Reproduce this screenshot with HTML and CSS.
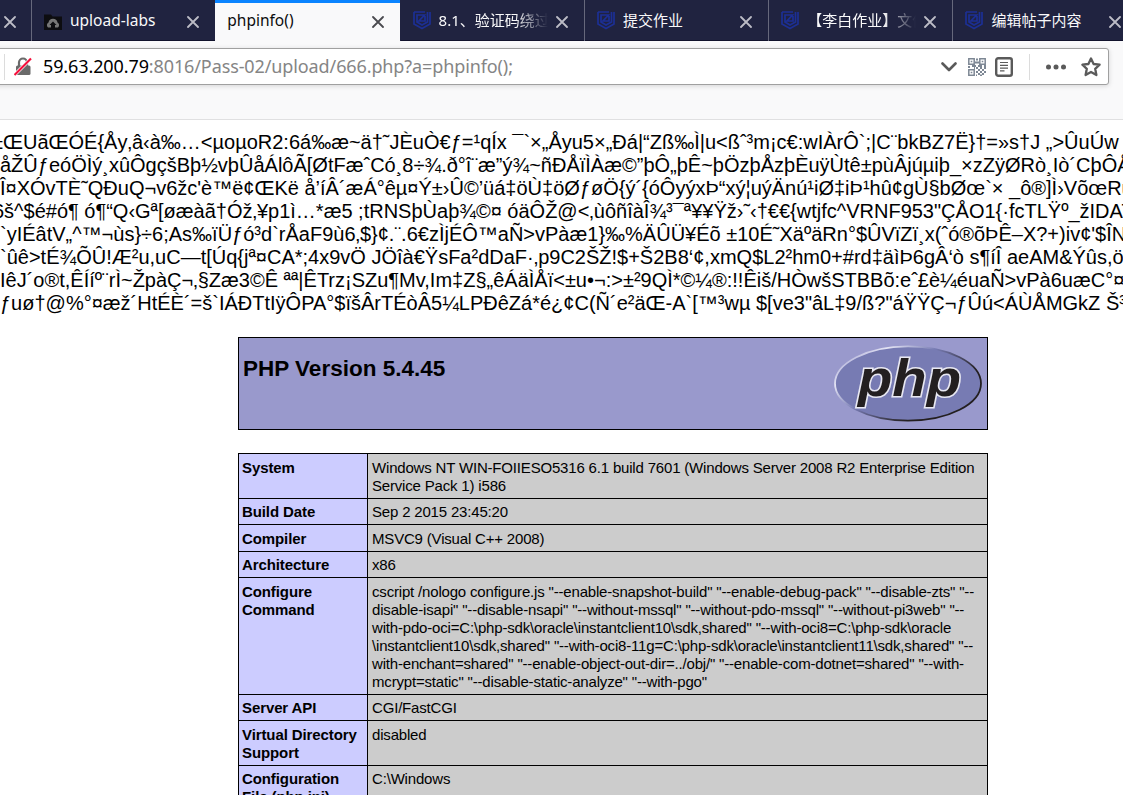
FILE: index.html
```html
<!DOCTYPE html>
<html lang="en">
<head>
    <meta charset="UTF-8">
    <meta name="viewport" content="width=device-width, initial-scale=1.0">
    <title>phpinfo()</title>
    <link rel="stylesheet" href="styles.css">
</head>
<body>
    <!-- shared icons -->
    <svg class="defs" width="0" height="0">
        <symbol id="close" viewBox="0 0 12 12">
            <path d="M1 1L11 11M11 1L1 11" fill="none" stroke="currentColor" stroke-width="1.8" stroke-linecap="round"/>
        </symbol>
        <symbol id="shield" viewBox="0 0 18 19">
            <path d="M1 1H12M17 1V13L9 17.500L1 13V1M14.500 1V11L9 14L4 11V4H11.500L6 10H12V5" fill="none" stroke="#1c2f94" stroke-width="1.700"/>
        </symbol>
    </svg>
    <div class="tabs">
        <div class="tab first"><svg class="close"><use href="#close"/></svg></div>
        <div class="tab">
            <svg class="icon folder" viewBox="0 0 20 18">
                <path d="M1 1.500H8L9.500 3.500H19V17H1Z" fill="#0d0d10"/>
                <path d="M5 14.500A3 3 0 0 1 5.500 9.500A4.600 4.600 0 0 1 14.500 9.500A3 3 0 0 1 15 14.500H12V12H13.500L10 8.500L6.500 12H8V14.500Z" fill="#777"/>
            </svg>
            <span class="title latin">upload-labs</span>
            <svg class="close"><use href="#close"/></svg>
        </div>
        <div class="tab active">
            <span class="title latin">phpinfo()</span>
            <svg class="close"><use href="#close"/></svg>
        </div>
        <div class="tab">
            <svg class="icon"><use href="#shield"/></svg>
            <span class="title fade">8.1、验证码绕过</span>
            <svg class="close"><use href="#close"/></svg>
        </div>
        <div class="tab">
            <svg class="icon"><use href="#shield"/></svg>
            <span class="title">提交作业</span>
            <svg class="close"><use href="#close"/></svg>
        </div>
        <div class="tab">
            <svg class="icon"><use href="#shield"/></svg>
            <span class="title fade">【李白作业】文件</span>
            <svg class="close"><use href="#close"/></svg>
        </div>
        <div class="tab">
            <svg class="icon"><use href="#shield"/></svg>
            <span class="title">编辑帖子内容</span>
            <svg class="close"><use href="#close"/></svg>
        </div>
    </div>
    <div class="toolbar">
        <div class="urlbar">
            <span class="line"></span>
            <svg class="lock" width="18" height="19" viewBox="0 0 18 19">
                <path d="M5 9V5.500A4 4 0 0 1 13 5.500V9" fill="none" stroke="#6a6a6a" stroke-width="2.200"/>
                <rect x="2" y="8.500" width="14.500" height="9.500" rx="1.500" fill="#6a6a6a"/>
                <path d="M0.500 18L17 1.500" stroke="#fff" stroke-width="3.400"/>
                <path d="M0.500 18L17 1.500" stroke="#f5103c" stroke-width="2.200"/>
            </svg>
            <span class="url"><b>59.63.200.79</b>:8016/Pass-02/upload/666.php?a=phpinfo();</span>
            <svg class="arrow" width="16" height="10" viewBox="0 0 16 10"><path d="M1.500 1.500L8 8L14.500 1.500" fill="none" stroke="#5a5a5a" stroke-width="2.600" stroke-linecap="round" stroke-linejoin="round"/></svg>
            <svg class="qr" width="18" height="18" viewBox="0 0 18 18" fill="none" stroke="#7d8794">
                <path d="M.8 .8H6.200V6.200H.8ZM11.800 .8H17.200V6.200H11.800ZM.8 11.800H6.200V17.200H.8Z" stroke-width="1.500"/>
                <path d="M2.700 3.500H4.300M13.700 3.500H15.300M2.700 14.500H4.300" stroke-width="1.600"/>
                <path d="M8 1.500H10M7 4.500H11M0 9H2M4 8H8M8 10H10M12 8H14M16 8H18M10 12H12M14 12H16M8 14H10M12 14H14M16 14H18M10 16H12M14 16H16M12 10H14M16 10H18M8 17.500H9M12 17.500H14M10 8H12M6 10H7" stroke-width="1.900"/>
            </svg>
            <svg class="reader" width="18" height="20" viewBox="0 0 18 20" fill="none" stroke="#5a5a5a">
                <rect x="1.200" y="1.200" width="15.600" height="17.600" rx="2" stroke-width="2.400"/>
                <path d="M5 5.500H13M5 8.300H13M5 11.100H13M5 13.900H9.500" stroke-width="1.200"/>
            </svg>
            <span class="line right"></span>
            <svg class="dots" width="20" height="6" viewBox="0 0 20 6" fill="#5a5a5a"><circle cx="2.500" cy="3" r="2.500"/><circle cx="10" cy="3" r="2.500"/><circle cx="17.500" cy="3" r="2.500"/></svg>
            <svg class="star" width="20" height="20" viewBox="0 0 20 20"><path d="M10 1.500L12.600 7L18.600 7.700L14.200 11.800L15.400 18L10 15L4.600 18L5.800 11.800L1.400 7.700L7.400 7Z" fill="none" stroke="#5a5a5a" stroke-width="2.300" stroke-linejoin="round"/></svg>
        </div>
    </div>
    <div class="page">
        <!-- raw bytes of the uploaded picture -->
        <div class="raw">
            <p class="r1">±ŒUãŒÓÉ{Åy‚â‹à‰…&lt;µoµoR2:6á‰æ~ä†˜JÈuÒ€ƒ=¹qÍx ¯`×„Åyu5×„Ðá|“Zß‰Ì|u&lt;ßˆ³m¡c€:wIÀrÔ`;|C¨bkBZ7Ë}†=»s†J „&gt;ÛuÚw</p>
            <p class="r2">åŽÛƒeóÖÌý¸xûÔgçšBþ½vþÛåÁlôÃ[ØtFæˆCó¸8÷¾.ð°î¨æ”ý¾~ñÐÅïÌÀæ©”þÔ„þÊ~þÖzþÅzþÈuÿÙtê±pùÂjúµiþ_×zZÿØRò¸Iò´CþÔÅ</p>
            <p class="r3">Î¤XÓvTÈ˜QÐuQ¬v6žc'è™ë¢ŒKë å’íÂ´æÁ°êµ¤Ý±›Û©’üá‡öÙ‡öØƒøÖ{ý´{óÔyýxÞ“xý¦uýÄnú¹iØ‡iÞ¹hû¢gÙ§bØœ`× _ô®]Ì›VõœRü</p>
            <p class="r4">6š^$é#ó¶ ó¶“Q‹Gª[øæàã†Óž‚¥p1ì…*æ5 ;tRNSþÙaþ¾©¤ óäÔŽ@&lt;‚ùôñîàÎ¾³¯ª¥¥Ÿž›˜‹†€€{wtjfc^VRNF953"ÇÅO1{·fcTLŸº_žIDAT</p>
            <p class="r5">`yIÉâtV„^™¬ùs}÷6;As‰ïÜƒó³d`rÅaF9ù6‚$}¢.¨.6€zÌjÉÔ™aÑ&gt;vPàæ1}‰%ÄÛÜ¥Éõ ±10É˜XäºäRn°$ÛVïZï¸x(ˆó®õÞÊ–X?+)iv¢'$ÎN</p>
            <p class="r6">`ûê&gt;tÉ¾ÕÛ!Æ²u,uC—t[Úq{jª¤CA*;4x9vÖ JÖîà€ŸsFa²dDaF·‚p9C2ŠŽ!$+Š2B8‘¢,xmQ$L2²hm0+#rd‡äìÞ6gÂ‘ò s¶íÎ aeAM&amp;Ýûs,ö</p>
            <p class="r7">IêJ´o®t,ÊÍíº¨rÌ~ŽpàÇ¬‚§Zæ3©Ê ªª|ÊTrz¡SZu¶Mv,Im‡Z§„êÁäÌÅï&lt;±u•¬:&gt;±²9QÌ*©¼®:!!Êiš/HÒwšSTBBõ:eˆ£è¼éuaÑ&gt;vPà6uæC°¤</p>
            <p class="r8">ƒuø†@%°¤æž´HtÉÈ´=š`IÁÐTtIÿÔPA°$ïšÂrTÉòÂ5¼LPÐêZá*é¿¢C(Ñ´e²äŒ-A`[™³wµ $[ve3"âL‡9/ß?"áŸŸÇ¬ƒÛú&lt;ÁÙÅMGkZ Š³</p>
        </div>
        <div class="head">
            <h1>PHP Version 5.4.45</h1>
            <svg class="logo" width="150" height="80" viewBox="0 0 150 80">
                <defs>
                    <linearGradient id="rim" x1="0" y1="0" x2="1" y2="0.700">
                        <stop offset="0.050" stop-color="#9999cc"/>
                        <stop offset="0.250" stop-color="#e4e4f4"/>
                        <stop offset="0.480" stop-color="#777bb3"/>
                        <stop offset="0.800" stop-color="#231f20"/>
                    </linearGradient>
                </defs>
                <ellipse cx="75" cy="40.500" rx="73" ry="37.200" fill="#777bb3" stroke="url(#rim)" stroke-width="1.800"/>
                <text x="25" y="53" textLength="103" lengthAdjust="spacingAndGlyphs" class="logoText">php</text>
            </svg>
        </div>
        <table class="info">
            <tr class="tall"><th>System</th><td>Windows NT WIN-FOIIESO5316 6.1 build 7601 (Windows Server 2008 R2 Enterprise Edition<br>Service Pack 1) i586</td></tr>
            <tr><th>Build Date</th><td>Sep 2 2015 23:45:20</td></tr>
            <tr class="tall"><th>Compiler</th><td>MSVC9 (Visual C++ 2008)</td></tr>
            <tr><th>Architecture</th><td>x86</td></tr>
            <tr class="tall"><th>Configure<br>Command</th><td>cscript /nologo configure.js "--enable-snapshot-build" "--enable-debug-pack" "--disable-zts" "--<br>disable-isapi" "--disable-nsapi" "--without-mssql" "--without-pdo-mssql" "--without-pi3web" "--<br>with-pdo-oci=C:\php-sdk\oracle\instantclient10\sdk,shared" "--with-oci8=C:\php-sdk\oracle<br>\instantclient10\sdk,shared" "--with-oci8-11g=C:\php-sdk\oracle\instantclient11\sdk,shared" "--<br>with-enchant=shared" "--enable-object-out-dir=../obj/" "--enable-com-dotnet=shared" "--with-<br>mcrypt=static" "--disable-static-analyze" "--with-pgo"</td></tr>
            <tr><th>Server API</th><td>CGI/FastCGI</td></tr>
            <tr class="tall"><th>Virtual Directory<br>Support</th><td>disabled</td></tr>
            <tr><th>Configuration<br>File (php.ini)</th><td>C:\Windows</td></tr>
        </table>
    </div>
</body>
</html>
```
FILE: styles.css
```css
*{
    box-sizing: border-box;
}
body{
    margin: 0;
    height: 795px;
    overflow: hidden;
    background-color: #fff;
    color: #000;
    font-family: "Liberation Sans", Arial, sans-serif;
}
.defs{
    display: none;
}
.tabs{
    display: flex;
    width: 1140px;
    height: 41px;
    background-color: #202340;
    border-bottom: 1px solid #11122c;
    font-family: "Noto Sans", "Noto Sans CJK SC", sans-serif;
    font-size: 15px;
    color: #f9f9fa;
}
.tab{
    display: flex;
    flex: none;
    align-items: center;
    width: 184.300px;
    height: 41px;
    padding: 0 16px 0 12px;
    border-left: 1px solid #66687c;
}
.tab.first{
    width: 31px;
    padding: 2px 0 0 4px;
    border: none;
}
.tab.active{
    height: 41px;
    background-color: #f9f9fa;
    border-left: none;
    border-top: 3px solid #0a84ff;
    color: #0c0c0d;
}
.active + .tab{
    border-left-color: #202340;
}
.icon{
    flex: none;
    width: 18px;
    height: 19px;
    margin-right: 8px;
}
.folder{
    width: 20px;
    height: 18px;
    margin: 3px 7px 0 -1px;
}
.title{
    flex: 1;
    margin-top: -2px;
    white-space: nowrap;
    overflow: hidden;
}
.latin{
    font-size: 15.500px;
}
.fade{
    -webkit-mask-image: linear-gradient(to right, #000 70%, transparent);
    mask-image: linear-gradient(to right, #000 70%, transparent);
}
.close{
    flex: none;
    width: 12px;
    height: 12px;
    margin: 2px 0 0 8px;
    color: #bcbcc6;
}
.first .close{
    margin: 0;
}
.active .close{
    margin-top: -1px;
    color: #4a4a4f;
}
.active .title{
    margin-top: -5px;
}
.toolbar{
    height: 79px;
    padding: 7px 14px 0 0;
    background-color: #f9f9fa;
    border-bottom: 1px solid #e0e0e1;
}
.urlbar{
    display: flex;
    align-items: center;
    height: 37px;
    margin-left: -10px;
    padding: 0 7px 0 13px;
    background-color: #fff;
    border: 1px solid #a0a0a0;
    border-radius: 3px;
    box-shadow: 0 1px 5px rgba(0, 0, 0, 0.15);
}
.line{
    width: 1px;
    height: 26px;
    background-color: #dcdcdc;
}
.lock{
    margin-left: 9px;
}
.url{
    flex: 1;
    margin: -2px 0 0 11px;
    font-family: "Noto Sans", sans-serif;
    font-size: 18px;
    letter-spacing: -0.110px;
    white-space: nowrap;
    color: #858585;
}
.url b{
    font-weight: normal;
    color: #000;
}
.qr{
    margin-left: 11px;
}
.reader{
    margin-left: 9px;
}
.line.right{
    margin-left: 16px;
}
.dots{
    margin-left: 16px;
}
.star{
    margin-left: 15px;
}
.page{
    padding-top: 11px;
}
.raw{
    height: 184px;
    font-size: 20px;
    line-height: 23px;
    white-space: nowrap;
    overflow: hidden;
}
.raw p{
    margin: 0;
}
.r1{
    text-indent: -8px;
}
.r4{
    text-indent: -7px;
}
.head{
    display: flex;
    justify-content: space-between;
    width: 750px;
    height: 93px;
    margin: 22px 0 0 238px;
    padding: 5px 4px;
    background-color: #9999cc;
    border: 1px solid #000;
}
.head h1{
    margin: 13px 0 0;
    font-size: 22.500px;
    line-height: 26px;
}
.logoText{
    font-size: 52px;
    font-weight: bold;
    font-style: italic;
    fill: #231f20;
    stroke: #e8e8f2;
    stroke-width: 3px;
    paint-order: stroke;
}
.info{
    width: 750px;
    margin: 23px 0 0 238px;
    border-collapse: collapse;
    table-layout: fixed;
    font-size: 15px;
    line-height: 18px;
    white-space: nowrap;
}
.info th, .info td{
    padding: 4px 4px 3px;
    border: 1px solid #000;
    text-align: left;
    vertical-align: top;
}
.info th{
    width: 129px;
    padding-left: 3px;
    letter-spacing: -0.100px;
    background-color: #ccccff;
}
.info td{
    letter-spacing: -0.180px;
    background-color: #cccccc;
}
.info .tall th, .info .tall td{
    padding-top: 5px;
}
```
